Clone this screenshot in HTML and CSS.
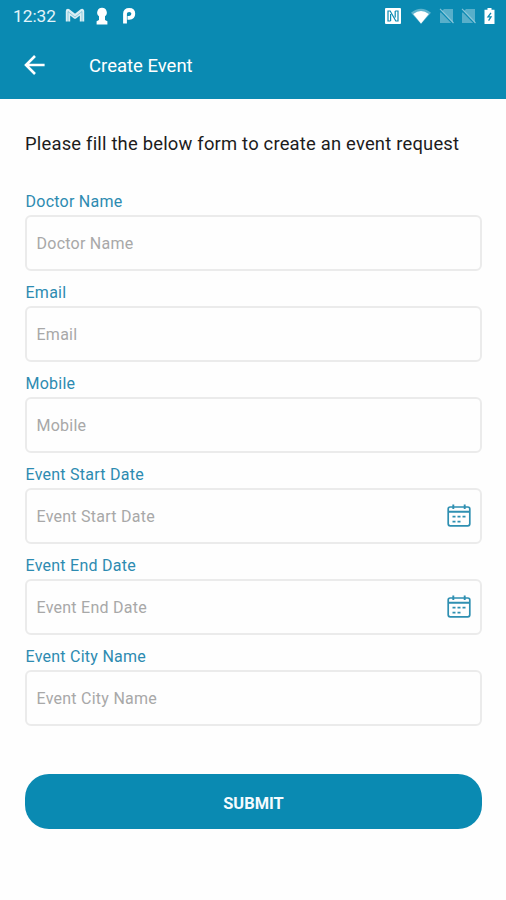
FILE: index.html
```html
<!DOCTYPE html>
<html lang="en">
<head>
<meta charset="utf-8">
<title>Create Event</title>
<link rel="stylesheet" href="styles.css">
</head>
<body>
<svg width="0" height="0" class="defs" aria-hidden="true">
  <symbol id="calendar" viewBox="0 0 24 24">
    <rect x="1.2" y="3" width="21.6" height="18.8" rx="2" fill="none" stroke="currentColor" stroke-width="1.7"/>
    <path d="M1.5 7.8H22.5M6.3 .6V5M17.7 .6V5" fill="none" stroke="currentColor" stroke-width="1.9"/>
    <path d="M5.5 12.6h3M10.5 12.6h3M15.5 12.6h3M5.5 17.6h3M10.5 17.6h3" fill="none" stroke="currentColor" stroke-width="1.8"/>
  </symbol>
  <symbol id="nosim" viewBox="0 0 15 16">
    <path d="M5 1H14V15H1V5Z" fill="#fff" opacity=".32"/>
    <path d="M0.5 1.5L14 15.5" stroke="#0a8ab2" stroke-width="2"/>
    <path d="M1 .8L14.5 15" stroke="#fff" stroke-width="1.1" opacity=".5"/>
  </symbol>
</svg>
<header class="top">
  <div class="status">
    <span class="time">12:32</span>
    <svg class="mail" width="20" height="16" viewBox="0 0 20 16"><path d="M3 13.5V3L10 8.5L17 3V13.5" fill="none" stroke="#fff" stroke-width="4.4" stroke-linejoin="round" opacity=".85"/><path d="M3 14V3.5L10 9L17 3.5V14" fill="none" stroke="#0a8ab2" stroke-width=".7" opacity=".5"/></svg>
    <svg class="keyhole" width="12" height="18" viewBox="0 0 12 18"><path d="M6 .8A4.7 4.7 0 0 1 9 9.2V13L11.4 14.2V17.4H.6V14.2L3 13V9.2A4.7 4.7 0 0 1 6 .8Z" fill="#fff"/></svg>
    <svg class="pay" width="14" height="18" viewBox="0 0 14 18"><path d="M3 16.4V6.8Q3 3 7.2 3Q11.3 3 11.3 6.8T7.2 10.8H5.5" fill="none" stroke="#fff" stroke-width="3.8" stroke-linejoin="round"/></svg>
    <div class="signals">
      <svg width="16" height="16" viewBox="0 0 16 16"><rect width="16" height="16" rx="1" fill="#fff"/><path d="M5.6 13H3V3H5.2L10.8 13H13V3H10.2M5.6 13V6M10.2 3V9.5" fill="none" stroke="#0a8ab2" stroke-width="1.2"/></svg>
      <svg class="wifi" width="20" height="16" viewBox="0 0 20 16"><path d="M0 4.8Q10-3.2 20 4.8L10 16Z" fill="#fff" opacity=".35"/><path d="M2.2 6Q10 .2 17.8 6L10 15.5Z" fill="#fff"/></svg>
      <svg class="sim" width="15" height="16"><use href="#nosim"/></svg>
      <svg class="sim2" width="15" height="16"><use href="#nosim"/></svg>
      <svg class="battery" width="11" height="16" viewBox="0 0 11 16"><path d="M3.5 0H7.5V1.8H10.5V16H.5V1.8H3.5Z" fill="#fff"/><path d="M7 4.8L4 8.8H7L4.6 12.6" fill="none" stroke="#0a8ab2" stroke-width="1.3"/></svg>
    </div>
  </div>
  <div class="bar">
    <svg class="back" width="22" height="22" viewBox="0 0 22 22"><path d="M20.6 11H2.5M11 2L2 11L11 20" fill="none" stroke="#fff" stroke-width="2.6"/></svg>
    <h1><span class="title">Create Event</span></h1>
  </div>
</header>
<main>
  <p class="intro">Please fill the below form to create an event request</p>
  <form>
    <div class="group"><div class="label">Doctor Name</div><div class="field">Doctor Name</div></div>
    <div class="group"><div class="label">Email</div><div class="field">Email</div></div>
    <div class="group"><div class="label">Mobile</div><div class="field">Mobile</div></div>
    <div class="group"><div class="label">Event Start Date</div><div class="field">Event Start Date<svg width="24" height="24"><use href="#calendar"/></svg></div></div>
    <div class="group"><div class="label">Event End Date</div><div class="field">Event End Date<svg width="24" height="24"><use href="#calendar"/></svg></div></div>
    <div class="group"><div class="label">Event City Name</div><div class="field">Event City Name</div></div>
    <button type="button">SUBMIT</button>
  </form>
</main>
</body>
</html>
```
FILE: styles.css
```css
* { box-sizing: border-box; }
body { margin: 0; background: #fefefe; font-family: Roboto, sans-serif; }
.defs { display: none; }
.top { height: 98.5px; background: #0a8ab2; color: #fff; }
.status { height: 32px; display: flex; align-items: center; padding: 0 11px 0 13px; }
.time { font-size: 17.3px; width: 43px; color: #e3f4fa; white-space: nowrap; }
.mail { margin-left: 9px; }
.keyhole { margin-left: 11px; }
.pay { margin-left: 14px; }
.signals { display: flex; align-items: center; margin-left: auto; }
.wifi { margin-left: 10px; }
.sim { margin-left: 8px; }
.sim2 { margin-left: 7px; }
.battery { margin-left: 8px; }
.bar { height: 66px; display: flex; align-items: center; padding-left: 24px; }
h1 { margin: 0 0 0 43px; font-size: 18.5px; font-weight: 400; line-height: 24px; padding-top: 2px; }
main { padding: 33.5px 24px 0 25px; }
.intro { margin: 0; font-size: 18.4px; line-height: 24px; letter-spacing: 0.2px; color: #1c1c1c; white-space: nowrap; }
form { padding-top: 36px; }
.group { height: 91px; }
.label { padding-left: 0.5px; font-size: 16px; line-height: 20px; color: #2d8bb1; letter-spacing: 0.25px; }
.field { margin-top: 3px; height: 56px; border: 2px solid #ebebeb; border-radius: 6px; padding: 0 9px 0 9.5px; display: flex; align-items: center; justify-content: space-between; font-size: 16px; color: #a8a8a8; letter-spacing: 0.25px; }
.field svg { color: #2e8fb1; }
button { display: block; width: 100%; height: 55px; margin: 36px 0 0; border: 0; border-radius: 24px; background: #0a8ab2; color: #f4fbfe; font: 700 16.4px Roboto, sans-serif; padding: 3px 0 0; }
```
